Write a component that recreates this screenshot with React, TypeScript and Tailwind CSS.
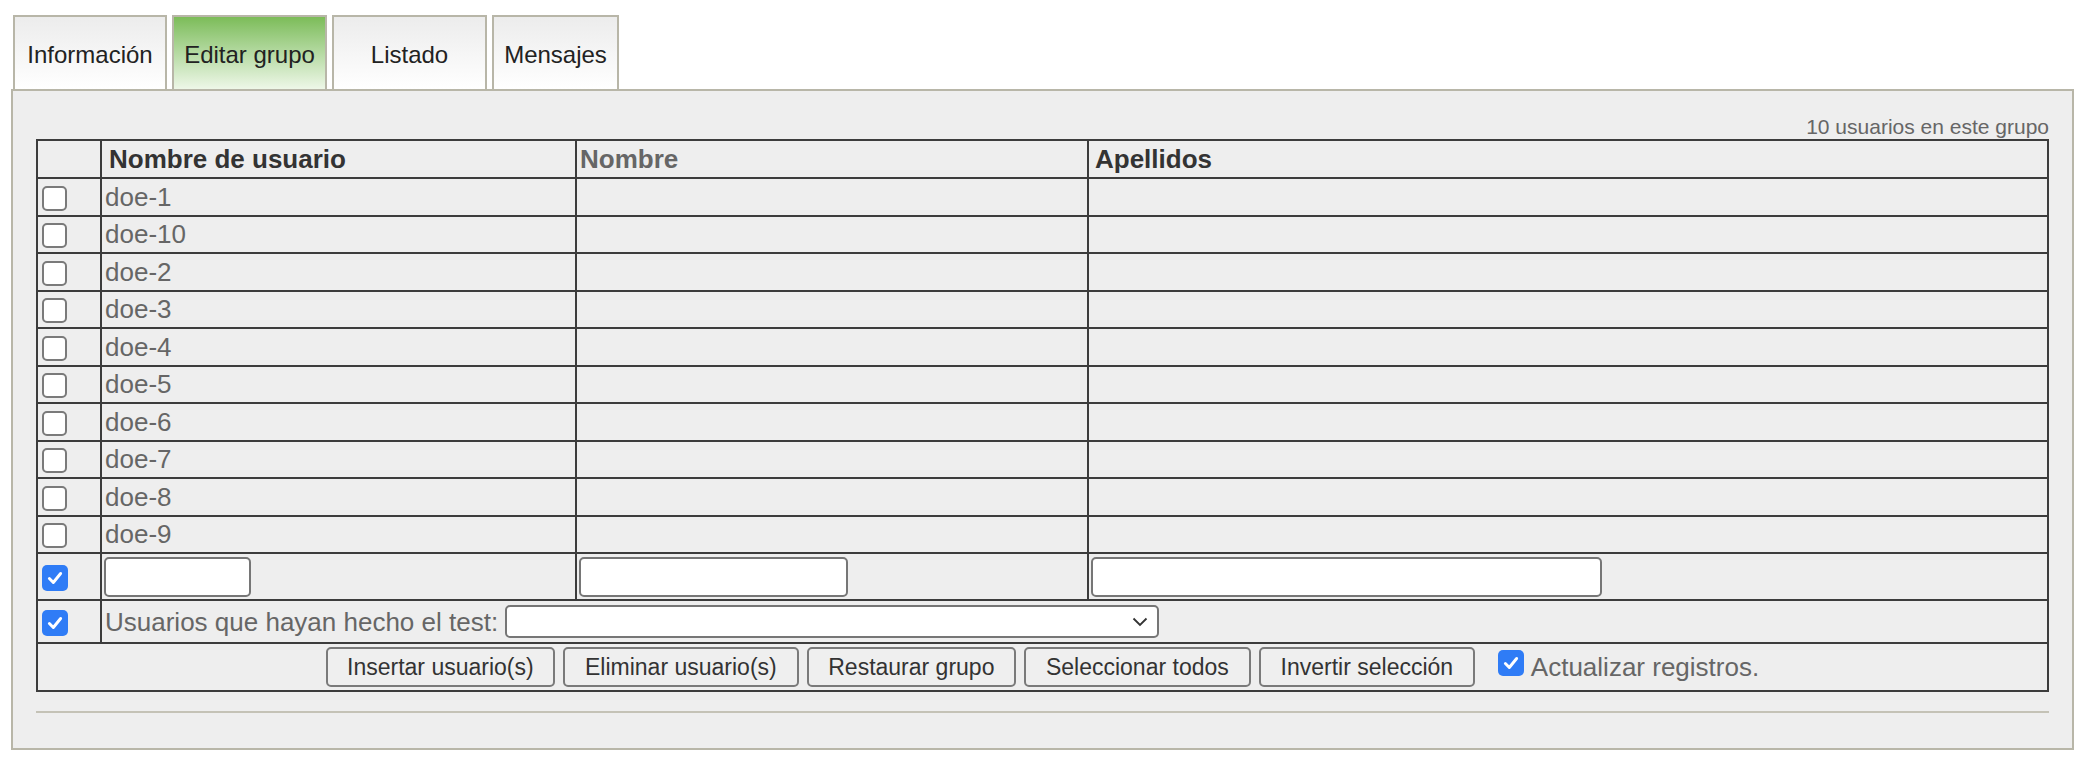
const users = ['doe-1', 'doe-10', 'doe-2', 'doe-3', 'doe-4', 'doe-5', 'doe-6', 'doe-7', 'doe-8', 'doe-9'];

const tabs = [
  { label: 'Información', w: 'w-[154px]', active: false },
  { label: 'Editar grupo', w: 'w-[155px]', active: true },
  { label: 'Listado', w: 'w-[155px]', active: false },
  { label: 'Mensajes', w: 'w-[127px]', active: false },
];

const buttons = [
  { label: 'Insertar usuario(s)', w: 'w-[229px]' },
  { label: 'Eliminar usuario(s)', w: 'w-[236px]' },
  { label: 'Restaurar grupo', w: 'w-[209px]' },
  { label: 'Seleccionar todos', w: 'w-[227px]' },
  { label: 'Invertir selección', w: 'w-[216px]' },
];

const Check = ({ checked }: { checked?: boolean }) => {
  if (checked) {
    return (
      <span className="inline-flex w-[26px] h-[26px] rounded-[5px] bg-[#2f7cf6] items-center justify-center align-middle">
        <svg width="18" height="18" viewBox="0 0 16 16">
          <path d="M3 8.5 L6.5 12 L13 4" fill="none" stroke="white" strokeWidth="2.6" strokeLinecap="round" strokeLinejoin="round" />
        </svg>
      </span>
    );
  }
  return <span className="inline-block w-[25px] h-[25px] rounded-[5px] border-2 border-[#7a7a7a] bg-white align-middle" />;
};

const cell = 'border-2 border-[#3c3c3c] p-0';

export default function App() {
  return (
    <div className="w-[2092px] h-[766px] bg-white pt-[15px] pl-[11px] font-['Liberation_Sans',Arial,sans-serif]">
      <div className="flex gap-[5px] pl-[2px]">
        {tabs.map((t) => (
          <div
            key={t.label}
            className={`${t.w} h-[74px] pt-[3px] border-2 border-b-0 border-[#b8b6a8] flex items-center justify-center text-[24px] text-[#222] ${
              t.active ? 'bg-gradient-to-b from-[#7cbc58] to-[#eef7e8]' : 'bg-gradient-to-b from-[#ececec] to-white'
            }`}
          >
            {t.label}
          </div>
        ))}
      </div>

      <div className="w-[2063px] h-[661px] border-2 border-[#b8b6a8] bg-[#eeeeee] px-[23px] pt-[23px]">
        <div className="text-right text-[21px] leading-[25px] text-[#666]">10 usuarios en este grupo</div>

        <table className="w-[2013px] border-collapse table-fixed text-[26px] text-[#666]">
          <colgroup>
            <col className="w-[64px]" />
            <col className="w-[475px]" />
            <col className="w-[512px]" />
            <col />
          </colgroup>
          <thead>
            <tr className="h-[38px]">
              <th className={cell}></th>
              <th className={`${cell} text-left pl-[7px] font-bold text-[#333] leading-[30px]`}>Nombre de usuario</th>
              <th className={`${cell} text-left pl-[3px] font-bold text-[#666] leading-[30px]`}>Nombre</th>
              <th className={`${cell} text-left pl-[6px] font-bold text-[#333] leading-[30px]`}>Apellidos</th>
            </tr>
          </thead>
          <tbody>
            {users.map((u) => (
              <tr key={u} className="h-[37.5px]">
                <td className={`${cell} pl-[4px] leading-none`}>
                  <Check />
                </td>
                <td className={`${cell} pl-[3px] leading-[30px]`}>{u}</td>
                <td className={cell}></td>
                <td className={cell}></td>
              </tr>
            ))}
            <tr className="h-[47px]">
              <td className={`${cell} pl-[4px] leading-none`}>
                <Check checked />
              </td>
              <td className={`${cell} pl-[2px]`}>
                <input className="block w-[147px] h-[40px] bg-white border-2 border-[#767676] rounded-[5px]" />
              </td>
              <td className={`${cell} pl-[2px]`}>
                <input className="block w-[269px] h-[40px] bg-white border-2 border-[#767676] rounded-[5px]" />
              </td>
              <td className={`${cell} pl-[2px]`}>
                <input className="block w-[511px] h-[40px] bg-white border-2 border-[#767676] rounded-[5px]" />
              </td>
            </tr>
            <tr className="h-[43px]">
              <td className={`${cell} pl-[4px] leading-none`}>
                <Check checked />
              </td>
              <td colSpan={3} className={`${cell} pl-[3px] leading-[30px]`}>
                <div className="flex items-center gap-[7px]">
                  <span>Usuarios que hayan hecho el test:</span>
                  <div className="w-[654px] h-[33px] bg-white border-2 border-[#767676] rounded-[5px] flex items-center justify-end pr-[9px]">
                    <svg width="16" height="10" viewBox="0 0 16 10">
                      <path d="M1.5 1.5 L8 8 L14.5 1.5" fill="none" stroke="#333" strokeWidth="1.8" />
                    </svg>
                  </div>
                </div>
              </td>
            </tr>
            <tr className="h-[48px]">
              <td colSpan={4} className={`${cell} leading-[30px]`}>
                <div className="flex items-center justify-center gap-[8px] h-[44px]">
                  {buttons.map((b) => (
                    <button
                      key={b.label}
                      className={`${b.w} h-[40px] rounded-[5px] border-2 border-[#7a7a7a] bg-[#efefef] text-[23px] leading-[26px] text-[#333]`}
                    >
                      {b.label}
                    </button>
                  ))}
                  <div className="flex items-center ml-[15px]">
                    <span className="flex leading-none mb-[8px]">
                      <Check checked />
                    </span>
                    <span className="ml-[7px]">Actualizar registros.</span>
                  </div>
                </div>
              </td>
            </tr>
          </tbody>
        </table>

        <div className="mt-[19px] h-[2px] bg-[#c4c2b6]" />
      </div>
    </div>
  );
}
